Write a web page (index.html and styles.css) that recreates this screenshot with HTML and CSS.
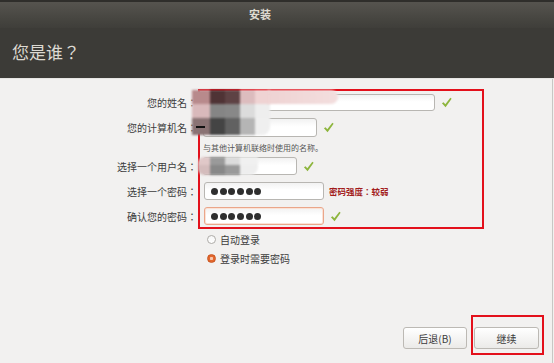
FILE: index.html
```html
<!DOCTYPE html>
<html lang="zh-CN">
<head>
    <meta charset="UTF-8">
    <title>安装</title>
    <link rel="stylesheet" href="styles.css">
</head>
<body>
    <div class="top-strip"></div>
    <div class="titlebar">安装</div>
    <div class="header"><h1>您是谁？</h1></div>

    <div class="content">
        <div class="form">
            <div class="row row-name">
                <label>您的姓名：</label>
                <div class="field">
                    <input type="text" class="input w-name">
                    <span class="check"><svg viewBox="0 0 12 12"><path d="M1 6.8 L2.8 5.6 L4.7 8 L10.2 0.8 L11.6 1.9 L5 11.2 Z"/></svg></span>
                </div>
            </div>
            <div class="row row-host">
                <label>您的计算机名：</label>
                <div class="field">
                    <input type="text" class="input w-host">
                    <span class="check"><svg viewBox="0 0 12 12"><path d="M1 6.8 L2.8 5.6 L4.7 8 L10.2 0.8 L11.6 1.9 L5 11.2 Z"/></svg></span>
                </div>
            </div>
            <div class="row row-hint">
                <span></span>
                <div class="hint">与其他计算机联络时使用的名称。</div>
            </div>
            <div class="row row-user">
                <label>选择一个用户名：</label>
                <div class="field">
                    <input type="text" class="input w-user">
                    <span class="check"><svg viewBox="0 0 12 12"><path d="M1 6.8 L2.8 5.6 L4.7 8 L10.2 0.8 L11.6 1.9 L5 11.2 Z"/></svg></span>
                </div>
            </div>
            <div class="row row-pass">
                <label>选择一个密码：</label>
                <div class="field">
                    <div class="input w-pass pass"><i></i><i></i><i></i><i></i><i></i><i></i></div>
                    <span class="strength">密码强度：较弱</span>
                </div>
            </div>
            <div class="row row-confirm">
                <label>确认您的密码：</label>
                <div class="field">
                    <div class="input w-pass pass focus"><i></i><i></i><i></i><i></i><i></i><i></i></div>
                    <span class="check"><svg viewBox="0 0 12 12"><path d="M1 6.8 L2.8 5.6 L4.7 8 L10.2 0.8 L11.6 1.9 L5 11.2 Z"/></svg></span>
                </div>
            </div>

            <!-- 打码区域 -->
            <div class="mosaic mosaic-a">
                <div class="m1"></div>
                <div class="m2"></div>
                <div class="m3"></div>
            </div>
            <div class="smear"></div>
            <div class="stroke"></div>
            <div class="mosaic mosaic-b">
                <div class="m1"></div>
                <div class="m2"></div>
            </div>
        </div>

        <div class="options">
            <label class="option"><span class="radio"></span>自动登录</label>
            <label class="option"><span class="radio on"></span>登录时需要密码</label>
        </div>

        <div class="footer">
            <button class="btn back">后退(B)</button>
            <div class="mark">
                <button class="btn">继续</button>
            </div>
        </div>
    </div>
</body>
</html>
```

FILE: styles.css
```css
body {
    margin: 0;
    width: 554px;
    height: 363px;
    overflow: hidden;
    background: #f2f1f0;
    font-family: "Noto Sans CJK SC", "Noto Sans", sans-serif;
    color: #3c3c3c;
    display: flex;
    flex-direction: column;
}
.top-strip {
    height: 3px;
    background: #2f2e2b;
    border-bottom: 1px solid #55534e;
    box-sizing: border-box;
}
.titlebar {
    height: 25px;
    line-height: 22px;
    padding-right: 34px;
    text-align: center;
    font-size: 11px;
    font-weight: bold;
    color: #dfdbd2;
    background: linear-gradient(#55534e, #45443f 70%, #3f3e3a);
}
.header {
    height: 51px;
    box-sizing: border-box;
    padding: 12px 0 0 12px;
    background: #3c3b37;
    border-bottom: 1px solid #e6e5e3;
}
/* 全角标点居中显示 */
.header h1, .row label, .strength {
    font-family: "Noto Sans CJK TC", sans-serif;
    font-feature-settings: "locl" 0;
}
.header h1 {
    margin: 0;
    font-size: 17px;
    font-weight: normal;
    line-height: 24px;
    color: #dcd9d2;
}
.content {
    flex: 1;
    display: flex;
    flex-direction: column;
    margin-right: 1px;
    border-right: 1px solid #c8c7c4;
}

/* 表单 */
.form {
    position: relative;
    margin-top: 10px;
    height: 140px;
}
.form::before {
    content: "";
    position: absolute;
    left: 198px;
    top: 0;
    width: 286px;
    height: 140px;
    border: 2px solid #e3101b;
    box-sizing: border-box;
}
.row {
    display: grid;
    grid-template-columns: 198px 1fr;
    align-items: center;
}
.row label {
    text-align: right;
    font-size: 10px;
    padding-right: 1px;
    white-space: nowrap;
}
.row-name { height: 26px; }
.row-host { height: 25px; }
.row-hint { height: 14px; }
.row-user { height: 24px; }
.row-pass { height: 26px; }
.row-confirm { height: 24px; }
.field {
    display: flex;
    align-items: center;
    padding-left: 5px;
}
.input {
    height: 18px;
    box-sizing: border-box;
    border: 1px solid #b8b6b2;
    border-radius: 3px;
    background: linear-gradient(#f2f2f2, #ffffff 45%);
    margin: 0;
    padding: 0 6px;
}
.w-name { width: 232px; height: 17px; }
.w-host { width: 114px; height: 19px; }
.w-user { width: 94px; }
.w-pass { width: 120px; margin-left: 1px; }
.pass {
    display: flex;
    align-items: center;
    gap: 1.7px;
}
.pass i {
    width: 7px;
    height: 7px;
    border-radius: 50%;
    background: #2e2e2e;
}
.focus {
    border-color: #eaa68a;
    box-shadow: inset 0 0 0 1px #fbe2d6;
}
.check {
    width: 11px;
    height: 11px;
    margin-left: 6px;
}
.check svg {
    display: block;
    width: 11px;
    height: 11px;
    fill: #8db53c;
}
.strength {
    margin-left: 5px;
    font-size: 8.5px;
    font-weight: bold;
    color: #a21c1c;
}
.hint {
    padding-left: 5px;
    font-size: 8px;
    color: #555;
}

/* 打码 */
.mosaic {
    position: absolute;
    filter: blur(0.8px);
}
.mosaic div { height: 14px; }
.mosaic-a { left: 192px; top: 1px; width: 78px; }
.mosaic-a .m1 { background: linear-gradient(to right, #b88a8c 0 18px, #4f3335 18px 33px, #5e4244 33px 48px, #dcbcbe 48px 63px, #efd3d3 63px); }
.mosaic-a .m2 { background: linear-gradient(to right, #d9b9bb 0 18px, #858585 18px 33px, #888888 33px 48px, #dcdcdc 48px 63px, #eeeeee 63px); }
.mosaic-a .m3 { height: 17px; background: linear-gradient(to right, #8a7374 0 18px, #444444 18px 33px, #616161 33px 48px, #b5b5b5 48px 63px, #efefef 63px); border-radius: 0 0 8px 0; }
.smear {
    position: absolute;
    left: 268px;
    top: 1px;
    width: 70px;
    height: 14px;
    border-radius: 0 8px 8px 0;
    background: linear-gradient(to right, #efd3d3, #f3dede);
    filter: blur(0.8px);
}
.stroke {
    position: absolute;
    left: 196px;
    top: 37px;
    width: 9px;
    height: 2px;
    background: #111;
}
.mosaic-b { left: 198px; top: 68px; width: 60px; }
.mosaic-b .m1 { height: 8px; background: linear-gradient(to right, #e0c8c8 0 12px, #9a9a9a 12px 27px, #dcdcdc 27px 42px, #f0f0f0 42px); border-radius: 6px 0 0 0; }
.mosaic-b .m2 { height: 10px; background: linear-gradient(to right, #d4bcbc 0 12px, #888888 12px 27px, #9a9a9a 27px 42px, #eeeeee 42px); border-radius: 0 0 8px 6px; }

/* 登录选项 */
.options {
    padding-left: 207px;
    margin-top: 1px;
}
.option {
    display: flex;
    align-items: center;
    height: 19px;
    font-size: 10px;
}
.radio {
    width: 9px;
    height: 9px;
    box-sizing: border-box;
    border-radius: 50%;
    border: 1px solid #aeaca8;
    background: linear-gradient(#f6f6f6, #ffffff);
    margin-right: 4px;
}
.radio.on {
    border-color: #c9541f;
    background: radial-gradient(circle, #f7c6ad 0 1.3px, #e3672d 2px);
}

/* 按钮 */
.footer {
    margin-top: auto;
    margin-bottom: 8px;
    margin-right: 8px;
    display: flex;
    justify-content: flex-end;
    align-items: flex-end;
}
.btn {
    height: 22px;
    font-family: inherit;
    font-size: 10px;
    color: #3c3c3c;
    border: 1px solid #bcb9b4;
    border-radius: 3px;
    background: linear-gradient(#ffffff, #ebeae8);
    padding: 0;
    width: 65px;
}
.back {
    width: 64px;
    margin-bottom: 6px;
    margin-right: 4px;
}
.mark {
    border: 2px solid #e3101b;
    padding: 7px 3px 4px 1px;
}
```
